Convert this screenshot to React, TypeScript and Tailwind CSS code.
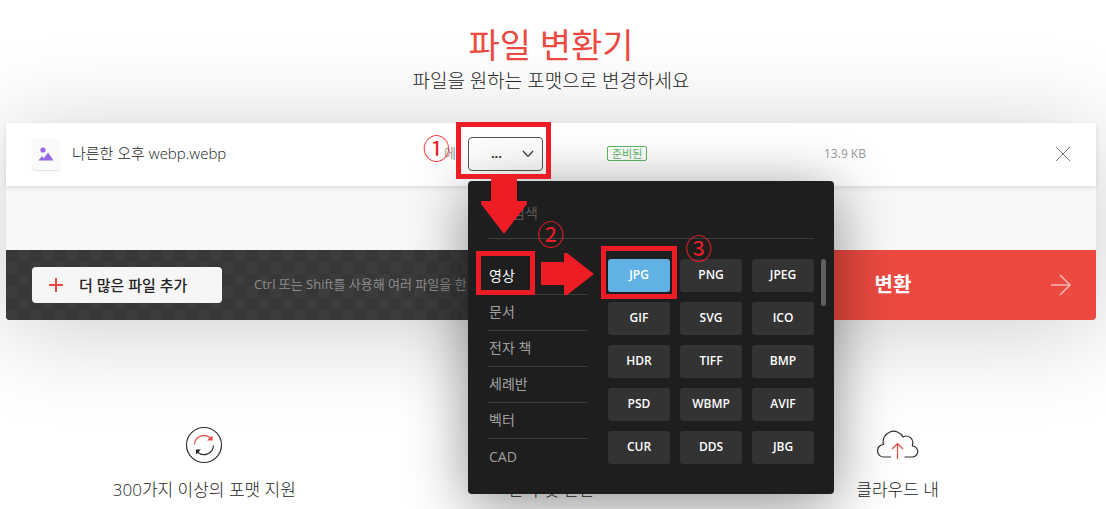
import React, { useState } from 'react';

const CATEGORIES = ['영상', '문서', '전자 책', '세례반', '벡터', 'CAD'];

const FORMATS = [
  'JPG', 'PNG', 'JPEG',
  'GIF', 'SVG', 'ICO',
  'HDR', 'TIFF', 'BMP',
  'PSD', 'WBMP', 'AVIF',
  'CUR', 'DDS', 'JBG',
];

const FormatMenu: React.FC = () => {
  const [category, setCategory] = useState('영상');
  const [format, setFormat] = useState('JPG');

  return (
    <div className="absolute top-11 left-0 z-20 w-[366px] rounded bg-[#1e1e1e] px-5 pb-[19px] shadow-[0_10px_60px_rgba(0,0,0,0.45)]">
      <div className="flex h-[58px] items-end border-b border-[#3c3c3c] pb-[15px]">
        <input
          type="text"
          aria-label="검색"
          placeholder="검색"
          className="w-full bg-transparent pl-6 text-sm text-white outline-none placeholder:text-[#5a5a5a]"
        />
      </div>

      <div className="flex gap-5">
        <ul className="w-[100px] pt-[20px]">
          {CATEGORIES.map((name) => (
            <li key={name} className="h-9 border-b border-[#3a3a3a] last:border-b-0">
              <button
                onClick={() => setCategory(name)}
                className={`h-full w-full pl-px text-left text-[14px] leading-4 ${name === category ? 'text-white' : 'text-[#a0a0a0]'}`}
              >
                {name}
              </button>
            </li>
          ))}
        </ul>

        <div className="relative grid flex-1 grid-cols-3 content-start gap-[10px] pt-5">
          {FORMATS.map((name) => (
            <button
              key={name}
              onClick={() => setFormat(name)}
              className={`h-[33px] rounded-[3px] text-[12px] font-semibold text-white ${name === format ? 'bg-[#62b1e4]' : 'bg-[#333333]'}`}
            >
              {name}
            </button>
          ))}
          <div className="absolute top-5 -right-3 h-[47px] w-[5px] rounded-full bg-[#5f5f5f]" />
        </div>
      </div>
    </div>
  );
};

/* Step markers drawn over the menu, anchored to the format picker */
const StepMarkers: React.FC = () => (
  <div className="pointer-events-none absolute top-0 left-0 z-30 text-[27px] leading-[27px] text-[#ee1c24]">
    <div className="absolute -top-[15px] -left-3 h-[57px] w-[95px] border-[5px] border-[#ee1c24]" />
    <div className="absolute top-[114px] left-2 h-11 w-[59px] border-[5px] border-[#ee1c24]" />
    <div className="absolute top-[109px] left-[133px] h-[53px] w-[76px] border-[5px] border-[#ee1c24]" />

    <svg className="absolute top-[41px] left-[13px]" width="46" height="56" fill="currentColor" aria-hidden="true">
      <path d="M10 0H36V23H46V26L23 56L0 26V23H10Z" />
    </svg>
    <svg className="absolute top-[116px] left-[73px]" width="53" height="42" fill="currentColor" aria-hidden="true">
      <path d="M0 9H23V0H26L53 21L26 42H23V32H0Z" />
    </svg>

    <span className="absolute -top-[2px] -left-[45px]">①</span>
    <span className="absolute top-[84px] left-[69px]">②</span>
    <span className="absolute top-[98px] left-[217px]">③</span>
  </div>
);

const FileRow: React.FC = () => (
  <div className="relative z-10 flex h-[63px] items-center bg-white pr-[25px] pb-[2px] pl-[26px] shadow-[0_2px_5px_rgba(0,0,0,0.1)]">
    <div className="mr-3 flex h-8 w-7 items-center justify-center rounded bg-[#fafafa] shadow-[0_1px_1px_rgba(0,0,0,0.12)]">
      <svg width="16" height="14" viewBox="0 0 16 14" fill="#9868e0" aria-hidden="true">
        <circle cx="5" cy="3" r="2.6" />
        <path d="M0.5 13.5L4 9L5.8 11.2L10 5.5L15.5 13.5Z" />
      </svg>
    </div>
    <span className="flex-1 truncate text-[15px] font-light text-[#222222]">나른한 오후 webp.webp</span>
    <span className="mr-3 text-[13px] text-[#999999]">에</span>

    <div className="relative">
      <button
        aria-haspopup="true"
        aria-expanded="true"
        className="flex h-[34px] w-[75px] items-center justify-end gap-5 rounded border border-[#555555] bg-white/50 pr-2 text-[13px] font-bold text-[#333333]"
      >
        ...
        <svg width="12" height="8" viewBox="0 0 12 8" fill="none" stroke="#333333" strokeWidth="1.2" aria-hidden="true">
          <path d="M1 1L6 6.4L11 1" />
        </svg>
      </button>
      <FormatMenu />
      <StepMarkers />
    </div>

    <div className="flex w-[281px] pl-16">
      <span className="rounded-[2px] border border-[#5cb860] px-1 text-[11px] leading-[13px] text-[#5cb860]">준비된</span>
    </div>
    <span className="w-[231px] text-[12px] text-[#999999]">13.9 KB</span>
    <button aria-label="삭제">
      <svg width="16" height="16" viewBox="0 0 16 16" stroke="#777777" strokeWidth="1" aria-hidden="true">
        <path d="M1 1L15 15M15 1L1 15" />
      </svg>
    </button>
  </div>
);

const Feature: React.FC<{ label: string; children: React.ReactNode }> = ({ label, children }) => (
  <div className="flex flex-col items-center">
    <div className="flex h-10 items-center">{children}</div>
    <p className="mt-[13px] text-[17px] leading-6 font-light whitespace-nowrap text-[#222222]">{label}</p>
  </div>
);

export default function App() {
  return (
    <div className="h-screen overflow-hidden bg-white font-['Open_Sans','Noto_Sans_CJK_KR',sans-serif]">
      <header className="relative z-10 pt-6 pr-[10px] pl-[6px] text-center">
        <h1 className="text-[34px] leading-[42px] text-[#ec4a41]">파일 변환기</h1>
        <p className="pt-px text-[19px] leading-7 font-light text-[#222222]">파일을 원하는 포맷으로 변경하세요</p>
      </header>

      <main className="mt-7 mr-[10px] ml-[6px] rounded-b shadow-[0_10px_100px_rgba(0,0,0,0.2)]">
        <FileRow />
        <div className="h-16 bg-[#f8f8f8]" />
        <div className="flex h-[70px] overflow-hidden rounded-b">
          <div className="flex flex-1 items-center bg-[#373737] bg-[conic-gradient(#3c3c3c_25%,#373737_0_50%,#3c3c3c_0_75%,#373737_0)] bg-[size:24px_24px] pl-[26px]">
            <button className="flex h-9 w-[190px] shrink-0 items-center gap-4 rounded bg-[#f6f6f6] pl-[17px] text-[15px] font-medium text-[#222222]">
              <svg width="14" height="14" viewBox="0 0 14 14" stroke="#ec4a41" strokeWidth="2" aria-hidden="true">
                <path d="M7 0V14M0 7H14" />
              </svg>
              더 많은 파일 추가
            </button>
            <span className="ml-8 w-0 flex-1 overflow-hidden text-[13px] whitespace-nowrap text-[#8c8c8c]">
              Ctrl 또는 Shift를 사용해 여러 파일을 한 번에 추가하세요
            </span>
          </div>
          <button className="relative w-[406px] bg-[#ec4a41] text-center text-xl font-bold text-white">
            변환
            <svg className="absolute top-6 right-6 text-white/60" width="22" height="22" viewBox="0 0 22 22" fill="none" stroke="currentColor" strokeWidth="1.6" aria-hidden="true">
              <path d="M1 11H20M10 1L20 11L10 21" />
            </svg>
          </button>
        </div>
      </main>

      <section className="mt-[105px] grid grid-cols-3 pr-[35px] pl-[31px]">
        <Feature label="300가지 이상의 포맷 지원">
          <svg width="38" height="38" viewBox="0 0 38 38" fill="none" strokeWidth="1.2" aria-hidden="true">
            <circle cx="19" cy="19" r="17.5" stroke="#333333" />
            <path d="M9.5 18.5A9.5 9.5 0 0 1 25.5 12" stroke="#ec4a41" />
            <path d="M27.5 9.5V14.5H22Z" fill="#ec4a41" />
            <path d="M28.5 19.5A9.5 9.5 0 0 1 12.5 26" stroke="#333333" />
            <path d="M11 28.5V23.5H16Z" fill="#222222" />
          </svg>
        </Feature>
        <Feature label="편리 및 간단">
          <svg width="38" height="38" viewBox="0 0 38 38" fill="none" stroke="#333333" strokeWidth="1.2" aria-hidden="true">
            <circle cx="19" cy="19" r="17.5" />
            <path d="M19 9V19L25 23" />
          </svg>
        </Feature>
        <Feature label="클라우드 내">
          <svg width="42" height="30" viewBox="0 0 42 30" fill="none" strokeWidth="1.2" aria-hidden="true">
            <path d="M14 27H7A6 6 0 0 1 6.5 14.5A10.5 10.5 0 0 1 26 7A6.5 6.5 0 0 1 35.5 14.5V16A5.5 5.5 0 0 1 35 27H27.5" stroke="#333333" />
            <path d="M20.5 29V14M15 19L20.5 13.5L26 19" stroke="#ec4a41" />
          </svg>
        </Feature>
      </section>
    </div>
  );
}
